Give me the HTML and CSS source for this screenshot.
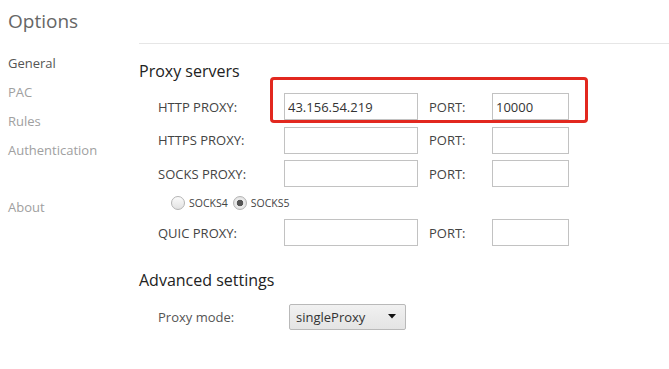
FILE: index.html
```html
<!DOCTYPE html>
<html lang="en">
<head>
    <meta charset="UTF-8">
    <meta name="viewport" content="width=device-width, initial-scale=1.0">
    <title>Options</title>
    <link rel="stylesheet" href="styles.css">
</head>
<body>
    <div class="page">
        <aside class="sidebar">
            <h1 class="title">Options</h1>
            <ul class="nav">
                <li class="nav-item active">General</li>
                <li class="nav-item">PAC</li>
                <li class="nav-item">Rules</li>
                <li class="nav-item">Authentication</li>
                <li class="nav-item nav-about">About</li>
            </ul>
        </aside>
        <main class="main">
            <hr class="divider">

            <section class="section">
                <h2 class="section-title">Proxy servers</h2>
                <div class="proxy-rows">
                    <div class="proxy-row">
                        <label class="row-label">HTTP PROXY:</label>
                        <input class="host-input" type="text" value="43.156.54.219">
                        <label class="port-label">PORT:</label>
                        <input class="port-input" type="text" value="10000">
                        <!-- highlight drawn over the http row -->
                        <div class="highlight"></div>
                    </div>
                    <div class="proxy-row">
                        <label class="row-label">HTTPS PROXY:</label>
                        <input class="host-input" type="text">
                        <label class="port-label">PORT:</label>
                        <input class="port-input" type="text">
                    </div>
                    <div class="proxy-row">
                        <label class="row-label">SOCKS PROXY:</label>
                        <input class="host-input" type="text">
                        <label class="port-label">PORT:</label>
                        <input class="port-input" type="text">
                    </div>
                    <div class="socks-row">
                        <input class="radio" type="radio" name="socks">
                        <span class="radio-label">SOCKS4</span>
                        <input class="radio" type="radio" name="socks" checked>
                        <span class="radio-label">SOCKS5</span>
                    </div>
                    <div class="proxy-row">
                        <label class="row-label">QUIC PROXY:</label>
                        <input class="host-input" type="text">
                        <label class="port-label">PORT:</label>
                        <input class="port-input" type="text">
                    </div>
                </div>
            </section>

            <section class="section">
                <h2 class="section-title advanced">Advanced settings</h2>
                <div class="proxy-row">
                    <label class="row-label mode-label">Proxy mode:</label>
                    <div class="select-box">
                        <span>singleProxy</span>
                        <svg class="select-arrow" width="8" height="5" viewBox="0 0 8 5">
                            <path d="M0 0 L8 0 L4 4.5 Z" fill="#111"/>
                        </svg>
                    </div>
                </div>
            </section>
        </main>
    </div>
</body>
</html>
```

FILE: styles.css
```css
body {
    font-family: "Open Sans", "Noto Sans", sans-serif;
    font-size: 13px;
    margin: 0;
    padding: 0;
    background-color: #fff;
    color: #444;
}
.page {
    display: flex;
}
.sidebar {
    width: 131px;
    padding-left: 8px;
    flex-shrink: 0;
}
.title {
    margin: 0;
    padding-top: 8px;
    font-size: 19px;
    line-height: 26px;
    font-weight: normal;
    color: #666;
}
.nav {
    list-style: none;
    margin: 15px 0 0 0;
    padding: 0;
}
.nav-item {
    line-height: 29px;
    color: #a0a0a0;
}
.nav-item.active {
    color: #555;
}
.nav-about {
    margin-top: 28px;
}
.main {
    flex-grow: 1;
    padding-top: 43px;
}
.divider {
    margin: 0;
    border: none;
    border-top: 1px solid #e6e6e6;
}
.section-title {
    margin: 16px 0 11px 0;
    font-size: 16px;
    line-height: 22px;
    font-weight: normal;
    color: #222;
}
.section-title.advanced {
    margin-top: 23px;
    margin-bottom: 12px;
}
.proxy-rows {
    display: flex;
    flex-direction: column;
    gap: 6.5px;
}
.proxy-row {
    position: relative;
    display: flex;
    align-items: center;
    height: 27px;
    padding-left: 19px;
}
.row-label {
    width: 126px;
    color: #444;
}
.host-input,
.port-input {
    box-sizing: border-box;
    height: 27px;
    border: 1px solid #c2c2c2;
    border-radius: 0;
    padding: 0 3px;
    font-family: inherit;
    font-size: 13px;
    color: #333;
    outline: none;
}
.host-input {
    width: 134px;
}
.port-label {
    width: 63px;
    margin-left: 11px;
    box-sizing: border-box;
}
.port-input {
    width: 77px;
}
.highlight {
    position: absolute;
    left: 131px;
    top: -16px;
    width: 318px;
    height: 46px;
    box-sizing: border-box;
    border: 3px solid #e2281f;
    border-radius: 4px;
}
.socks-row {
    display: flex;
    align-items: center;
    height: 19px;
    padding-left: 32px;
}
.radio {
    appearance: none;
    -webkit-appearance: none;
    box-sizing: border-box;
    width: 14px;
    height: 14px;
    margin: 0;
    border: 1px solid #b4b4b4;
    border-radius: 50%;
    background: linear-gradient(#fbfbfb, #e2e2e2);
}
.radio:checked {
    background: radial-gradient(circle, #555 0, #555 3px, #eee 3.6px, #dcdcdc 7px);
}
.radio-label {
    margin: 0 5px 0 4px;
    font-size: 10.5px;
    color: #444;
}
.mode-label {
    color: #555;
}
.select-box {
    box-sizing: border-box;
    display: flex;
    align-items: center;
    justify-content: space-between;
    width: 117px;
    height: 26px;
    margin-left: 5px;
    padding: 0 9px 0 6px;
    border: 1px solid #b9b9b9;
    border-radius: 2px;
    background: linear-gradient(#f1f1f1, #e4e4e4);
    color: #333;
}
```
